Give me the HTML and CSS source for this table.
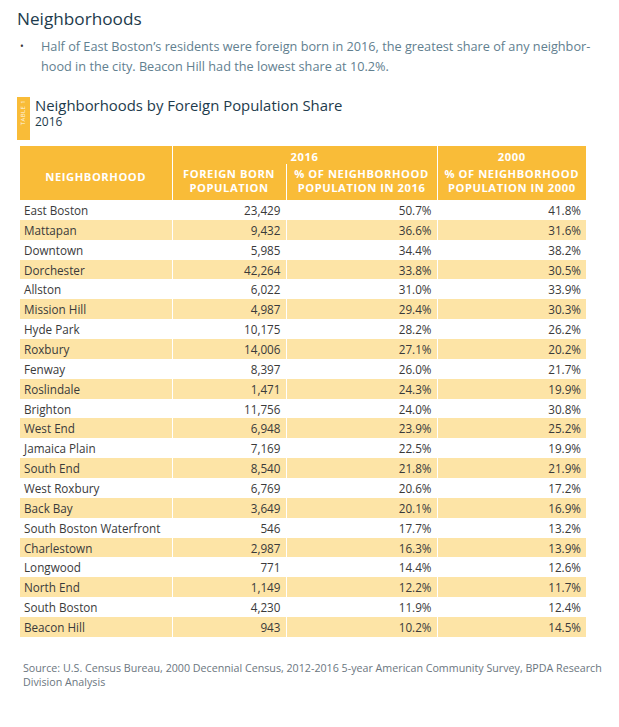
FILE: index.html
```html
<!DOCTYPE html>
<html lang="en">
<head>
<meta charset="utf-8">
<title>Neighborhoods</title>
<link rel="stylesheet" href="styles.css">
</head>
<body>
<div class="page">
  <h1 class="title">Neighborhoods</h1>
  <ul class="bullets">
    <li>Half of East Boston’s residents were foreign born in 2016, the greatest share of any neighbor-<br>hood in the city. Beacon Hill had the lowest share at 10.2%.</li>
  </ul>

  <div class="table-head">
    <div class="tag"><span>TABLE 1</span></div>
    <div class="table-titles">
      <div class="table-title">Neighborhoods by Foreign Population Share</div>
      <div class="table-sub">2016</div>
    </div>
  </div>

  <table class="data">
    <colgroup>
      <col class="c0"><col class="c1"><col class="c2"><col class="c3">
    </colgroup>
    <thead>
      <tr class="yr">
        <th rowspan="2" class="hn">NEIGHBORHOOD</th>
        <th colspan="2" class="year">2016</th>
        <th class="year">2000</th>
      </tr>
      <tr class="sub">
        <th>FOREIGN BORN<br>POPULATION</th>
        <th>% OF NEIGHBORHOOD<br>POPULATION IN 2016</th>
        <th class="notop">% OF NEIGHBORHOOD<br>POPULATION IN 2000</th>
      </tr>
    </thead>
    <tbody>
      <tr><td>East Boston</td><td>23,429</td><td>50.7%</td><td>41.8%</td></tr>
      <tr><td>Mattapan</td><td>9,432</td><td>36.6%</td><td>31.6%</td></tr>
      <tr><td>Downtown</td><td>5,985</td><td>34.4%</td><td>38.2%</td></tr>
      <tr><td>Dorchester</td><td>42,264</td><td>33.8%</td><td>30.5%</td></tr>
      <tr><td>Allston</td><td>6,022</td><td>31.0%</td><td>33.9%</td></tr>
      <tr><td>Mission Hill</td><td>4,987</td><td>29.4%</td><td>30.3%</td></tr>
      <tr><td>Hyde Park</td><td>10,175</td><td>28.2%</td><td>26.2%</td></tr>
      <tr><td>Roxbury</td><td>14,006</td><td>27.1%</td><td>20.2%</td></tr>
      <tr><td>Fenway</td><td>8,397</td><td>26.0%</td><td>21.7%</td></tr>
      <tr><td>Roslindale</td><td>1,471</td><td>24.3%</td><td>19.9%</td></tr>
      <tr><td>Brighton</td><td>11,756</td><td>24.0%</td><td>30.8%</td></tr>
      <tr><td>West End</td><td>6,948</td><td>23.9%</td><td>25.2%</td></tr>
      <tr><td>Jamaica Plain</td><td>7,169</td><td>22.5%</td><td>19.9%</td></tr>
      <tr><td>South End</td><td>8,540</td><td>21.8%</td><td>21.9%</td></tr>
      <tr><td>West Roxbury</td><td>6,769</td><td>20.6%</td><td>17.2%</td></tr>
      <tr><td>Back Bay</td><td>3,649</td><td>20.1%</td><td>16.9%</td></tr>
      <tr><td>South Boston Waterfront</td><td>546</td><td>17.7%</td><td>13.2%</td></tr>
      <tr><td>Charlestown</td><td>2,987</td><td>16.3%</td><td>13.9%</td></tr>
      <tr><td>Longwood</td><td>771</td><td>14.4%</td><td>12.6%</td></tr>
      <tr><td>North End</td><td>1,149</td><td>12.2%</td><td>11.7%</td></tr>
      <tr><td>South Boston</td><td>4,230</td><td>11.9%</td><td>12.4%</td></tr>
      <tr><td>Beacon Hill</td><td>943</td><td>10.2%</td><td>14.5%</td></tr>
    </tbody>
  </table>

  <p class="source">Source: U.S. Census Bureau, 2000 Decennial Census, 2012-2016 5-year American Community Survey, BPDA Research<br>Division Analysis</p>
</div>
</body>
</html>
```
FILE: styles.css
```css
html, body {
  margin: 0;
  padding: 0;
  background: #ffffff;
}

.page {
  width: 619px;
  font-family: "Open Sans", "Noto Sans", sans-serif;
  padding: 7px 0 0 0;
}

.title {
  margin: 0 0 0 17px;
  font-size: 17.2px;
  line-height: 23px;
  font-weight: 400;
  color: #1d3b4c;
}

.bullets {
  list-style: none;
  margin: 6px 0 0 0;
  padding: 0 0 0 41px;
}

.bullets li {
  position: relative;
  font-size: 12.7px;
  line-height: 20px;
  color: #62808f;
}

.bullets li::before {
  content: "•";
  position: absolute;
  left: -21px;
  top: 0;
  color: #333333;
  font-size: 10px;
}

.table-head {
  display: flex;
  align-items: flex-start;
  gap: 5px;
  margin: 21px 0 0 17px;
}

.tag {
  width: 13px;
  height: 43px;
  background: #f9bc38;
  display: flex;
  align-items: flex-start;
  justify-content: center;
}

.tag span {
  writing-mode: vertical-rl;
  transform: rotate(180deg);
  font-size: 6px;
  line-height: 13px;
  color: #ffffff;
  letter-spacing: 0.4px;
  margin-top: 3px;
  opacity: 0.9;
}

.table-titles {
  color: #1d3b4c;
}

.table-title {
  font-size: 14.9px;
  line-height: 17px;
}

.table-sub {
  font-size: 12px;
  line-height: 13px;
  margin-top: 1px;
}

.data {
  margin: 6px 0 0 20px;
  width: 566px;
  table-layout: fixed;
  border-collapse: collapse;
  font-size: 11.7px;
  color: #3a3a3a;
}

.c0 { width: 152px; }
.c1 { width: 114px; }
.c2 { width: 151px; }
.c3 { width: 149px; }

.data th {
  background: #f9bc38;
  color: #ffffff;
  font-weight: 700;
  font-size: 11.2px;
  letter-spacing: 0.55px;
  text-align: center;
  padding: 0;
  border-left: 1px solid #ffffff;
}

.data tr.yr th:first-child {
  border-left: none;
}

.data tr.yr th {
  height: 16px;
  line-height: 15px;
  padding-top: 2px;
}

.data tr.sub th {
  height: 34px;
  line-height: 14.5px;
  padding-bottom: 2px;
}

.data tr.yr th.hn {
  padding-top: 6px;
}

.data td {
  height: 19.86px;
  padding: 0 5px;
  line-height: 16px;
  text-align: right;
  border-left: 1px solid #ffffff;
  white-space: nowrap;
}

.data td:first-child {
  text-align: left;
  padding-left: 4px;
  border-left: none;
}

.data tbody tr:nth-child(even) td {
  background: #fde4a6;
}

.source {
  margin: 24px 0 0 23px;
  font-size: 10.7px;
  line-height: 14px;
  color: #6b7680;
}
```
